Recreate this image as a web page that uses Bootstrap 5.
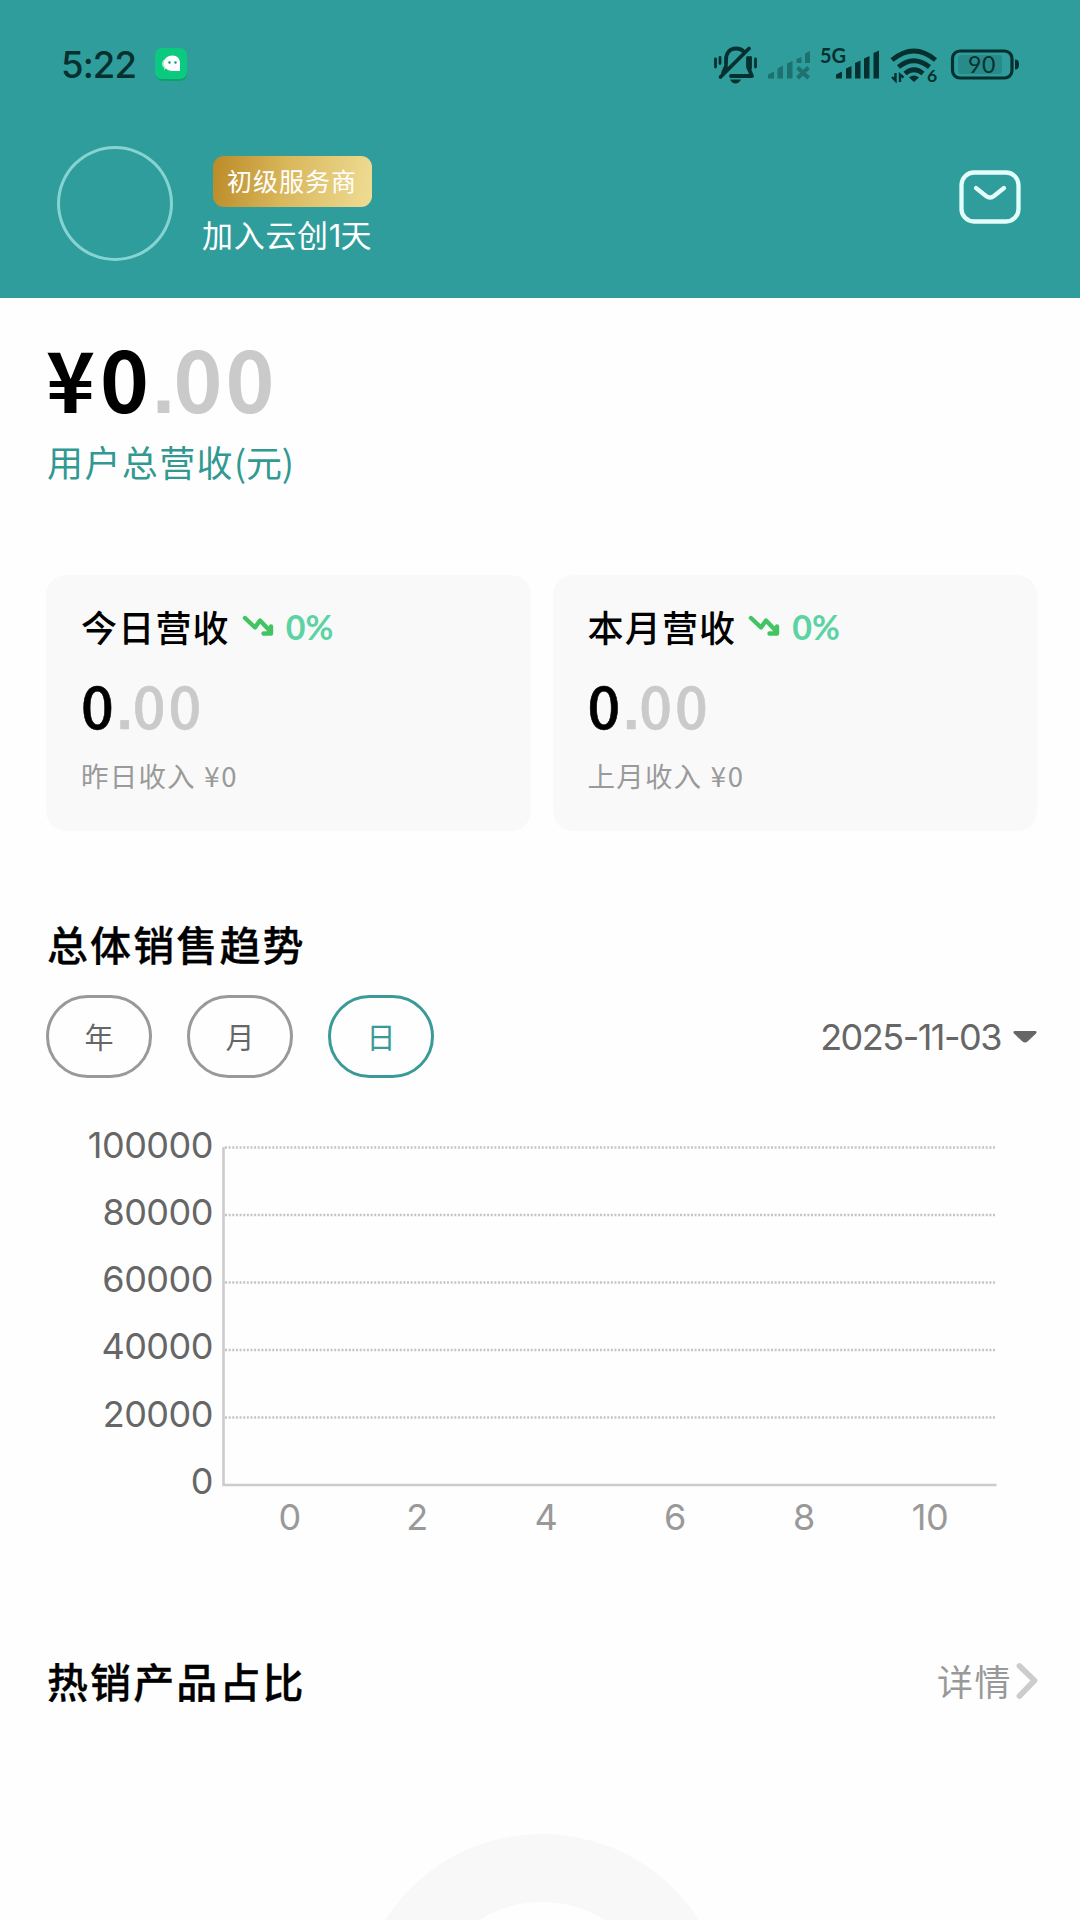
<!DOCTYPE html>
<html lang="zh-CN">
<head>
<meta charset="utf-8">
<meta name="viewport" content="width=device-width, initial-scale=1">
<title>用户总营收</title>
<link href="https://cdn.jsdelivr.net/npm/bootstrap@5.3.0/dist/css/bootstrap.min.css" rel="stylesheet">
<style>
:root{--teal:#2f9d9b;--cjk:"Noto Sans CJK SC",sans-serif;--num:Lato,"Noto Sans CJK SC",sans-serif;--geo:Inter,"Noto Sans CJK SC",sans-serif}
body{width:1080px;height:1920px;overflow:hidden;background:#fefefe;color:#000;font-family:var(--cjk)}
svg{display:block;flex:none}
.num{font-family:var(--num)}
.geo{font-family:var(--geo)}
.hero{height:298px;background:var(--teal)}
.statusbar{height:128px;padding:0 0 0 61px}
.clock{font-size:36.5px;line-height:45px;font-weight:500;color:#04302f;letter-spacing:-.9px;margin-top:43px;width:92px}
.appicon{margin-top:46px}
.sysicons{margin-top:30px}
.profile{padding:18px 58px 0 57px}
.avatar{width:116px;height:115px;border:3px solid #86d3d3}
.level{height:51px;width:159px;margin:10px 0 0 40px;border-radius:11px;background:linear-gradient(100deg,#bb8a27,#d9b75b 45%,#efdd95);color:#fff;font-size:25px;letter-spacing:1px;line-height:49px;padding-left:14px}
.joined{margin:5px 0 0 29px;font-size:31px;line-height:43px;letter-spacing:.7px;color:#fff}
.joined span{letter-spacing:-1px}
.mailbtn{margin-top:24px}
.wrap{padding:0 43px 0 46px}
.total{height:104px;margin-top:27px;font-size:83px;line-height:104px;font-weight:700;letter-spacing:3px}
.yen{margin-right:2px}
.cents{color:#cacaca}
.pt{font-family:"Liberation Sans",sans-serif;letter-spacing:-1.5px;line-height:0}
.totallabel{height:52px;margin-top:6px;font-size:36px;line-height:52px;letter-spacing:1.4px;padding-left:1px;color:#329892}
.totallabel span{letter-spacing:-.2px}
.tiles{margin-top:88px;gap:22px}
.tile{flex:1;height:256px;border-radius:20px;background:#f9f9f9;padding:24px 0 0 35px}
.tname{font-size:36px;line-height:52px;font-weight:500;letter-spacing:1.2px}
.trend{margin-left:10px}
.pct{font-size:34px;line-height:52px;font-weight:700;color:#5bd3a3;margin-left:12px;padding-top:2px}
.tval{height:70px;font-size:57.5px;line-height:70px;font-weight:500;letter-spacing:3px;-webkit-text-stroke:.6px;margin-top:16px}
.tval .pt{font-weight:700;letter-spacing:0}
.tsub{font-size:27.5px;line-height:40px;letter-spacing:1.2px;color:#9a9a9a;margin-top:16px}
.tsub span{margin-left:1px;letter-spacing:1.8px}
.heading{font-size:41px;line-height:60px;font-weight:500;letter-spacing:2.1px;-webkit-text-stroke:.3px #000;margin:0 0 0 1px}
.h-trend{margin-top:82px}
.filters{margin-top:22px}
.pills{gap:35px}
.pill{width:106px;height:83px;border:3px solid #999;border-radius:42px;background:none;color:#666;font-size:29px;padding:0}
.pill.on{border-color:#3a9a97;color:#3a9a97}
.date{font-size:36px;letter-spacing:-1.5px;color:#666}
.date svg{margin-left:12px}
.chart{margin:30px 0 0 -46px}
.h-hot{margin-top:100px}
.detail{font-size:36px;letter-spacing:1.5px;color:#999;line-height:60px}
.detail svg{margin:2px -2px 0 3px}
.donut{margin:124px auto 0}
</style>
</head>
<body>
<header class="hero">
  <div class="statusbar d-flex">
    <div class="clock geo">5:22</div>
    <svg class="appicon" width="38" height="38" viewBox="0 0 38 38">
      <rect x="3" y="4" width="31" height="31" rx="7" fill="#0aa36b"/>
      <rect x="2" y="2" width="32" height="31" rx="7" fill="#0bca7f"/>
      <path d="M9 18a7 6 0 0 1 6-6v11h-3v2l-1-3q-2-2-2-4z" fill="#a9f0d3"/>
      <path d="M19.500 9.500c-5 0-8.500 3-8.500 7.500s3.500 8 8.500 8H27v-8c0-4.500-3-7.500-7.500-7.500z" fill="#fff"/>
      <circle cx="16.500" cy="16.500" r="1.200" fill="#0a9a66"/><circle cx="22.500" cy="16.500" r="1.200" fill="#0a9a66"/>
    </svg>
    <svg class="sysicons ms-auto" width="380" height="80" viewBox="700 30 380 80" fill="#04302f">
      <g fill="none" stroke="#04302f" stroke-width="3.800" stroke-linecap="round" stroke-linejoin="round">
        <path d="M726 64v-4c0-7 4-11.500 10-11.500 3.500 0 6 1 8 3.500M748 58v9l4 9h-21M726 66l-3 7M720.500 77L749 48.500"/>
        <path d="M715.500 59v8M720 57.500v6M755.500 59v8M750.500 57.500v11" stroke-width="2.800"/>
      </g>
      <path d="M730 79.500h11q-2 4-5.500 4t-5.500-4z"/>
      <g opacity=".4">
        <path d="M768 78.500v-4l6-3v7zM777.500 78.500v-10l5.500-3v13zM787 78.500v-15l5.500-2.500v17.500zM796.500 63v-4l5-2v6zM805 63V53.500l5-2.500v12z"/>
        <path d="M797.500 67.500l11 10.500m0-10.500l-11 10.500" stroke="#04302f" stroke-width="4"/>
      </g>
      <path d="M836 78.500v-4l6-3v7zM846 78.500v-10l5.500-2.500v12.500zM855 78.500V63l5.500-2.500v18zM864 78.500V58.500l5.500-2.500v22.500zM873.500 78.500V53l5.500-2.500v28z"/>
      <text x="820" y="63" class="num" font-size="20" font-weight="700">5G</text>
      <g fill="none" stroke="#04302f" stroke-width="4.800">
        <path d="M892 60q22-18 43.500 0M898.500 67q15-12.500 31 0M905 73.500q9-7.500 18 0"/>
      </g>
      <path d="M909 77.500q5-4 10 0l-5 4.500z"/>
      <path d="M895.500 73v7.500l-3.500-3.500M900 82v-7.500l3.500 3" fill="none" stroke="#04302f" stroke-width="2.400"/>
      <text x="927" y="82" class="num" font-size="17.500" font-weight="700">6</text>
      <rect x="958" y="55" width="44" height="19" rx="3" opacity=".16"/>
      <rect x="952.500" y="51" width="59.500" height="27" rx="7.500" fill="none" stroke="#04302f" stroke-width="3.200"/>
      <path d="M1015 59.500q4 0 4 5t-4 5z"/>
      <text x="982" y="72.500" class="num" text-anchor="middle" font-size="23" letter-spacing=".6">90</text>
    </svg>
  </div>
  <div class="profile d-flex">
    <div class="avatar rounded-circle"></div>
    <div>
      <div class="level">初级服务商</div>
      <div class="joined">加入云创<span class="geo">1</span>天</div>
    </div>
    <svg class="mailbtn ms-auto" width="63" height="54" viewBox="0 0 63 54" fill="none" stroke="#e3fdfb" stroke-width="4.300" stroke-linecap="round">
      <rect x="2.500" y="2.500" width="57" height="49" rx="12.500"/>
      <path d="M17 18l10 8q4 3 8 0l10-8"/>
    </svg>
  </div>
</header>
<main class="wrap">
  <div class="total"><span class="yen">¥</span>0<span class="cents"><span class="pt">.</span>00</span></div>
  <div class="totallabel">用户总营收<span>(元)</span></div>
  <section class="tiles d-flex">
    <div class="tile">
      <div class="d-flex align-items-center"><span class="tname">今日营收</span>
        <svg class="trend" width="34" height="24" viewBox="0 0 34 24" fill="none" stroke="#43c463" stroke-width="4.400" stroke-linecap="round" stroke-linejoin="round"><path d="M5 4l10 9.500 5-7L31 18M23.500 19.500h7.500v-7"/></svg>
        <span class="pct num">0%</span></div>
      <div class="tval">0<span class="cents"><span class="pt">.</span>00</span></div>
      <div class="tsub">昨日收入 <span>¥0</span></div>
    </div>
    <div class="tile">
      <div class="d-flex align-items-center"><span class="tname">本月营收</span>
        <svg class="trend" width="34" height="24" viewBox="0 0 34 24" fill="none" stroke="#43c463" stroke-width="4.400" stroke-linecap="round" stroke-linejoin="round"><path d="M5 4l10 9.500 5-7L31 18M23.500 19.500h7.500v-7"/></svg>
        <span class="pct num">0%</span></div>
      <div class="tval">0<span class="cents"><span class="pt">.</span>00</span></div>
      <div class="tsub">上月收入 <span>¥0</span></div>
    </div>
  </section>
  <h2 class="heading h-trend">总体销售趋势</h2>
  <div class="filters d-flex justify-content-between align-items-center">
    <div class="pills d-flex">
      <button class="pill">年</button><button class="pill">月</button><button class="pill on">日</button>
    </div>
    <div class="date geo d-flex align-items-center">2025-11-03
      <svg width="24" height="14" viewBox="0 0 24 14" fill="#666"><path d="M1.500 1h21q2 .5.500 2.500l-8.500 8q-2.500 2-5 0L1 3.500Q-.5 1.500 1.500 1z"/></svg>
    </div>
  </div>
  <svg class="chart geo" width="1080" height="442" viewBox="0 1108 1080 442" font-size="36" letter-spacing="-.5">
    <g stroke="#c4c4c4" stroke-width="2.400" stroke-dasharray="2 1.640">
      <path d="M225 1147.500h771M225 1215h771M225 1282.500h771M225 1350h771M225 1417.500h771"/>
    </g>
    <path d="M223.500 1147v338h773" fill="none" stroke="#ccc" stroke-width="2.600"/>
    <g fill="#666" text-anchor="end">
      <text x="213" y="1157.500">100000</text><text x="213" y="1224.500">80000</text><text x="213" y="1291.500">60000</text>
      <text x="213" y="1359">40000</text><text x="213" y="1426.500">20000</text><text x="213" y="1494">0</text>
    </g>
    <g fill="#999" text-anchor="middle">
      <text x="289.500" y="1529.500">0</text><text x="417" y="1529.500">2</text><text x="546" y="1529.500">4</text>
      <text x="675" y="1529.500">6</text><text x="804" y="1529.500">8</text><text x="930" y="1529.500">10</text>
    </g>
  </svg>
  <div class="d-flex justify-content-between align-items-center h-hot">
    <h2 class="heading">热销产品占比</h2>
    <div class="detail d-flex align-items-center">详情
      <svg width="24" height="38" viewBox="0 0 24 38" fill="none" stroke="#ccc" stroke-width="5.800" stroke-linecap="round" stroke-linejoin="round"><path d="M4.500 4L19.500 18.500 4.500 34"/></svg>
    </div>
  </div>
  <svg class="donut" width="374" height="86" viewBox="0 0 374 86"><circle cx="187" cy="186" r="152" fill="none" stroke="#f8f8f8" stroke-width="68"/></svg>
</main>
<script src="https://cdn.jsdelivr.net/npm/bootstrap@5.3.0/dist/js/bootstrap.bundle.min.js"></script>
</body>
</html>
